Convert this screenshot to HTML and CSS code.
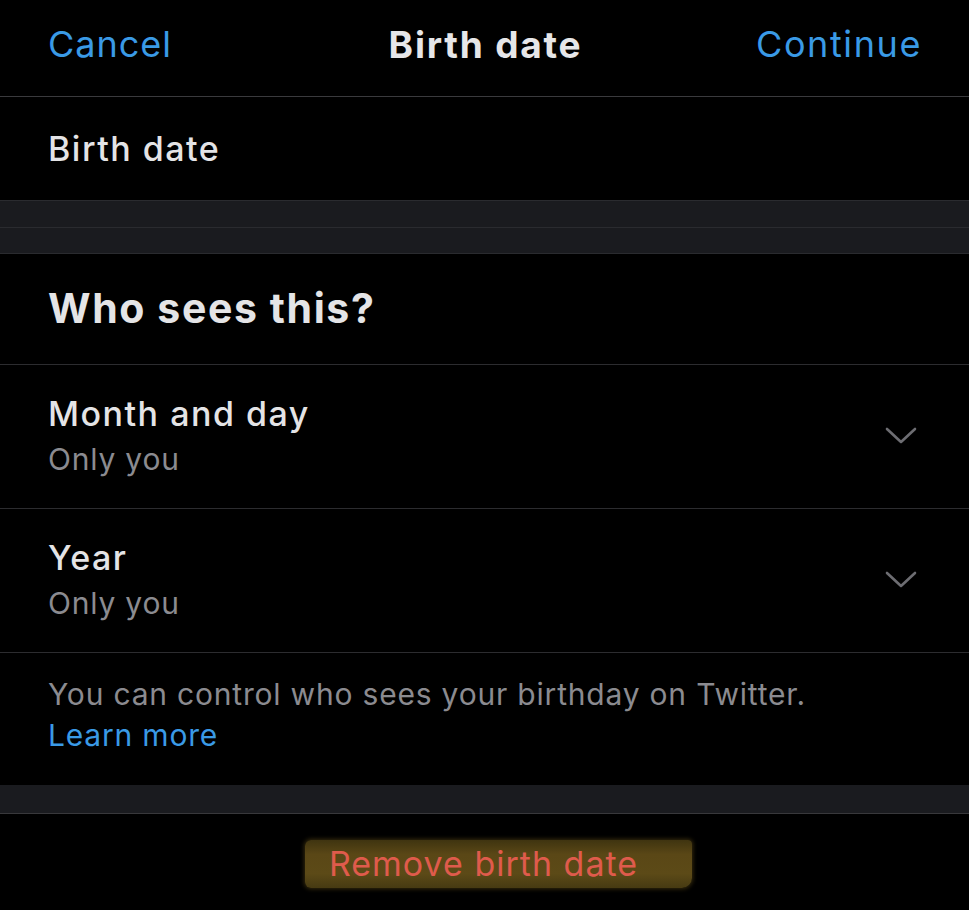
FILE: index.html
```html
<!DOCTYPE html>
<html lang="en">
<head>
<meta charset="utf-8">
<title>Birth date</title>
<link rel="stylesheet" href="styles.css">
</head>
<body>
<div class="screen">
  <header class="nav">
    <span class="nav-link nav-left">Cancel</span>
    <span class="nav-title">Birth date</span>
    <span class="nav-link nav-right">Continue</span>
  </header>
  <div class="row-date">
    <span class="label">Birth date</span>
  </div>
  <div class="band band-double">
    <div class="band-half"></div>
    <div class="band-half"></div>
  </div>
  <div class="section-head">
    <h2 class="section-title">Who sees this?</h2>
  </div>
  <div class="option">
    <div class="option-text">
      <div class="label">Month and day</div>
      <div class="sub">Only you</div>
    </div>
    <svg class="chev" width="32" height="18" viewBox="0 0 32 18"><path d="M2 2 L16 15 L30 2" fill="none" stroke="#6d6d72" stroke-width="2.6" stroke-linecap="round" stroke-linejoin="round"/></svg>
  </div>
  <div class="option">
    <div class="option-text">
      <div class="label">Year</div>
      <div class="sub">Only you</div>
    </div>
    <svg class="chev" width="32" height="18" viewBox="0 0 32 18"><path d="M2 2 L16 15 L30 2" fill="none" stroke="#6d6d72" stroke-width="2.6" stroke-linecap="round" stroke-linejoin="round"/></svg>
  </div>
  <div class="note">
    <div class="sub">You can control who sees your birthday on Twitter.</div>
    <div class="link">Learn more</div>
  </div>
  <div class="band band-single"></div>
  <div class="remove-row">
    <span class="remove">Remove birth date</span>
  </div>
</div>
</body>
</html>
```
FILE: styles.css
```css
* { box-sizing: border-box; margin: 0; padding: 0; }
html, body { background: #000; }
body { margin: 0; font-family: Inter, "Noto Sans", sans-serif; color: #e4e4e6; }
.screen { width: 969px; height: 910px; overflow: hidden; display: flex; flex-direction: column; }

.nav {
  height: 97px;
  border-bottom: 1px solid #3a3a3d;
  display: grid;
  grid-template-columns: 1fr auto 1fr;
  align-items: center;
  padding: 0 48px 8px 48px;
}
.nav-left { justify-self: start; }
.nav-right { justify-self: end; }
.nav-link { color: #3a9ae6; font-size: 36px; letter-spacing: 1px; }
.nav-right { letter-spacing: 1.6px; margin-right: -1px; }
.nav-title { font-size: 37px; font-weight: 700; color: #e6e6e8; letter-spacing: 1.8px; margin-left: 2px; }

.row-date {
  height: 103px;
  display: flex;
  align-items: center;
  padding: 0 48px;
}
.label { font-size: 34px; font-weight: 500; color: #e4e4e6; letter-spacing: 1.5px; }

.band { background: #1a1b1f; border-top: 1px solid #2a2b2f; border-bottom: 1px solid #2a2b2f; }
.band-double { height: 54px; display: flex; flex-direction: column; }
.band-half { flex: 1; }
.band-half + .band-half { border-top: 1px solid #2a2b2f; }
.band-single { height: 29px; border-top: none; border-bottom: 1px solid #38383b; }

.section-head {
  height: 111px;
  border-bottom: 1px solid #2c2c2f;
  display: flex;
  align-items: center;
  padding: 0 48px 2px 48px;
}
.section-title { font-size: 41px; font-weight: 700; color: #e4e4e6; letter-spacing: 1.6px; }

.option {
  height: 144px;
  border-bottom: 1px solid #2c2c2f;
  display: flex;
  align-items: center;
  justify-content: space-between;
  padding: 0 52px 2px 48px;
}
.option-text { display: flex; flex-direction: column; gap: 0; }
.option-text .label { line-height: 46px; }
.sub { font-size: 30px; color: #8b8b90; line-height: 44px; letter-spacing: 0.8px; }
.chev { display: block; }

.note {
  height: 132px;
  padding: 20px 48px 0 48px;
}
.note .sub { line-height: 42px; }
.link { font-size: 30px; color: #3a9ae6; line-height: 40px; letter-spacing: 0.8px; }

.remove-row {
  flex: 1;
  display: flex;
  justify-content: center;
  padding-top: 26px;
}
.remove {
  align-self: flex-start;
  margin-left: 28px;
  font-size: 34px;
  color: #df5b4c;
  background: linear-gradient(#3f3410, #5a4716 30%, #5c4a17 70%, #463a12);
  padding: 3px 54px 4px 24px;
  border-radius: 6px 4px 10px 6px;
  letter-spacing: 1px;
  box-shadow: 0 0 4px 1px rgba(90, 72, 22, 0.6);
}
```
